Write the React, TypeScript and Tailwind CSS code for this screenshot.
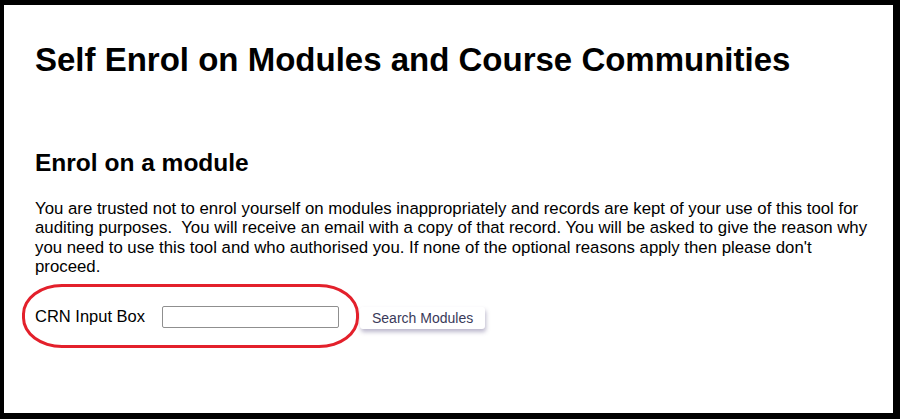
export default function App() {
  return (
    <div className="w-[900px] h-[419px] bg-black pt-[5px] pl-[4px] pr-[7px] pb-[6px] font-['Liberation_Sans',Arial,sans-serif] text-black">
      <div className="h-full bg-white pl-[31px] pr-[18px] pt-[35px]">
        <h1 className="text-[33px] leading-[40px] font-bold">
          Self Enrol on Modules and Course Communities
        </h1>

        <h2 className="mt-[69px] text-[24.5px] leading-[28px] font-bold">Enrol on a module</h2>

        <p className="mt-[22px] text-[16.8px] leading-[19.4px] whitespace-pre-wrap">
          {"You are trusted not to enrol yourself on modules inappropriately and records are kept of your use of this tool for auditing purposes.  You will receive an email with a copy of that record. You will be asked to give the reason why you need to use this tool and who authorised you. If none of the optional reasons apply then please don't proceed."}
        </p>

        {/* CRN row */}
        <div className="relative mt-[28px] flex items-center h-[24px]">
          <span className="text-[16.5px] w-[127px]">CRN Input Box</span>
          <input
            type="text"
            className="w-[177px] h-[22px] border border-[#8f8f8f] rounded-[2px] bg-white"
          />
          <button className="ml-[21px] mt-[3px] h-[22px] px-[12px] text-[14px] text-[#3a3a5a] bg-white rounded-[3px] shadow-[1px_3px_4px_rgba(60,50,110,0.35)]">
            Search Modules
          </button>

          {/* annotation */}
          <div className="absolute left-[-13px] top-[-21px] w-[337px] h-[64px] border-[3px] border-[#e3202b] rounded-[40px/30px]" />
        </div>
      </div>
    </div>
  );
}
